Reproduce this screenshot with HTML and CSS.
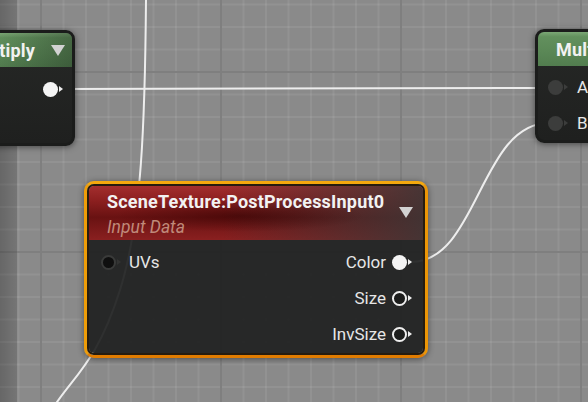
FILE: index.html
```html
<!DOCTYPE html>
<html>
<head>
<meta charset="utf-8">
<link rel="stylesheet" href="styles.css">
</head>
<body>
<div class="canvas">
  <div class="edge-shade"></div>
  <svg class="wires" width="588" height="402" viewBox="0 0 588 402">
    <path d="M62 89 L549 88"/>
    <path d="M411 262 C478 262 480 123 549 123"/>
    <path d="M146 0 C145 120 142 220 120 290 C98 360 75 375 55 405"/>
  </svg>

  <div class="node mul mul-left">
    <div class="mul-head">
      <span class="mul-title">Multiply</span>
      <span class="collapse"></span>
    </div>
    <div class="mul-body">
      <div class="row">
        <span class="pin"><i class="dot dim"></i><i class="arr dim-arr"></i></span>
        <span class="pin"><i class="dot full"></i><i class="arr light"></i></span>
      </div>
      <div class="row">
        <span class="pin"><i class="dot dim"></i><i class="arr dim-arr"></i></span>
      </div>
    </div>
  </div>

  <div class="node mul mul-right">
    <div class="mul-head">
      <span class="mul-title">Multiply</span>
    </div>
    <div class="mul-body">
      <div class="row start">
        <span class="pin"><i class="dot grey"></i><i class="arr grey-arr"></i></span>
        <span class="label">A</span>
      </div>
      <div class="row start">
        <span class="pin"><i class="dot grey"></i><i class="arr grey-arr"></i></span>
        <span class="label">B</span>
      </div>
    </div>
  </div>

  <div class="node st">
    <div class="st-frame">
      <div class="st-head">
        <div class="st-titles">
          <div class="st-title">SceneTexture:PostProcessInput0</div>
          <div class="st-sub">Input Data</div>
        </div>
        <span class="collapse st-collapse"></span>
      </div>
      <div class="st-body">
        <div class="row">
          <div class="side">
            <span class="pin"><i class="dot black"></i><i class="arr black-arr"></i></span>
            <span class="label in-label">UVs</span>
          </div>
          <div class="side">
            <span class="label out-label">Color</span>
            <span class="pin"><i class="dot full"></i><i class="arr light"></i></span>
          </div>
        </div>
        <div class="row end">
          <div class="side">
            <span class="label out-label">Size</span>
            <span class="pin"><i class="dot ring"></i><i class="arr light"></i></span>
          </div>
        </div>
        <div class="row end">
          <div class="side">
            <span class="label out-label">InvSize</span>
            <span class="pin"><i class="dot ring"></i><i class="arr light"></i></span>
          </div>
        </div>
      </div>
    </div>
  </div>
</div>
</body>
</html>
```
FILE: styles.css
```css
html, body {
  margin: 0;
  padding: 0;
  background: #8a8a8a;
}

body {
  font-family: Roboto, "Liberation Sans", sans-serif;
}

.canvas {
  position: relative;
  width: 588px;
  height: 402px;
  overflow: hidden;
  background-color: #8a8a8a;
  background-image:
    linear-gradient(90deg, #7f7f7f 2px, transparent 2px),
    linear-gradient(180deg, #7f7f7f 2px, transparent 2px),
    linear-gradient(90deg, rgba(255, 255, 255, 0.07) 2px, transparent 2px),
    linear-gradient(180deg, rgba(255, 255, 255, 0.07) 2px, transparent 2px);
  background-size: 180px 180px, 180px 180px, 22.5px 22.5px, 22.5px 22.5px;
  background-position: 40px 0, 0 71px, 17.5px 0, 0 3.5px;
}

.edge-shade {
  position: absolute;
  left: 0;
  top: 0;
  width: 17px;
  height: 100%;
  background: linear-gradient(90deg, rgba(0, 0, 0, 0.26), rgba(0, 0, 0, 0.15));
}

.wires {
  position: absolute;
  left: 0;
  top: 0;
}

.wires path {
  fill: none;
  stroke: #ededed;
  stroke-width: 2;
}

.node {
  position: absolute;
  box-sizing: border-box;
}

/* ---------- Multiply nodes ---------- */
.mul {
  background: linear-gradient(180deg, #262826, #1f201f);
  border: 3px solid #1b1c1b;
  border-radius: 9px;
  box-shadow: 0 1px 6px rgba(0, 0, 0, 0.5);
  overflow: hidden;
}

.mul-left {
  left: -101px;
  top: 30px;
  width: 176px;
  height: 116px;
}

.mul-right {
  left: 535px;
  top: 29px;
  width: 120px;
  height: 114px;
}

.mul-head {
  height: 34px;
  display: flex;
  align-items: center;
  justify-content: space-between;
  box-sizing: border-box;
  background:
    linear-gradient(90deg, rgba(0, 0, 0, 0) 55%, rgba(20, 30, 20, 0.35) 100%),
    linear-gradient(180deg, #7ba775 0%, #62905d 14%, #5a8756 60%, #527d4f 100%);
  color: #f2f2f2;
  font-size: 18px;
  font-weight: 700;
  letter-spacing: 0.2px;
}

.mul-left .mul-head {
  padding-left: 66px;
  padding-right: 7px;
}

.mul-right .mul-head {
  padding-left: 18px;
}

.mul-body {
  padding-top: 4px;
}

.mul-right .mul-body {
  padding-top: 3px;
  padding-left: 10px;
}

.mul-left .mul-body {
  padding-left: 1px;
  padding-right: 9px;
}

/* ---------- rows & pins ---------- */
.row {
  height: 36px;
  display: flex;
  align-items: center;
  justify-content: space-between;
}

.row.start {
  justify-content: flex-start;
}

.row.end {
  justify-content: flex-end;
}

.side {
  display: flex;
  align-items: center;
}

.pin {
  display: inline-flex;
  align-items: center;
}

.dot {
  display: block;
  width: 15px;
  height: 15px;
  box-sizing: border-box;
  border-radius: 50%;
}

.dot.full {
  background: #f4f4f4;
}

.dot.ring {
  border: 2.5px solid #eeeeee;
  background: #1c1d1c;
}

.dot.black {
  background: #0f0f0f;
  border: 2px solid #3a3b3a;
}

.dot.grey {
  background: #3c3d3c;
}

.dot.dim {
  background: #3a3b3a;
}

.arr {
  display: block;
  width: 0;
  height: 0;
  margin-left: 1px;
  border-left: 4px solid #eeeeee;
  border-top: 3.5px solid transparent;
  border-bottom: 3.5px solid transparent;
}

.arr.grey-arr,
.arr.dim-arr {
  border-left-color: #3c3d3c;
}

.arr.black-arr {
  border-left-color: #333433;
}

.label {
  color: #e6e6e6;
  font-size: 17px;
  line-height: 20px;
}

.mul-right .label {
  margin-left: 9px;
}

.in-label {
  margin-left: 8px;
}

.out-label {
  margin-right: 6px;
}

.collapse {
  display: block;
  width: 0;
  height: 0;
  border-top: 11px solid #d2d2d2;
  border-left: 7.5px solid transparent;
  border-right: 7.5px solid transparent;
}

/* ---------- SceneTexture node ---------- */
.st {
  left: 84px;
  top: 181px;
  width: 344px;
  border: 3px solid;
  border-color: #f4a80e #ec9606 #e17c00 #ef9d08;
  border-radius: 10px;
  box-shadow: 0 1px 6px rgba(0, 0, 0, 0.45);
}

.st-frame {
  border: 2px solid #261c0f;
  border-radius: 7px;
  overflow: hidden;
}

.st-head {
  height: 54px;
  box-sizing: border-box;
  display: flex;
  justify-content: space-between;
  align-items: flex-start;
  padding: 6px 10px 3px 18px;
  background:
    radial-gradient(ellipse 50% 40% at 45% 55%, rgba(45, 0, 0, 0.5), rgba(45, 0, 0, 0) 75%),
    linear-gradient(90deg, rgba(60, 52, 52, 0) 40%, rgba(62, 54, 54, 0.9) 100%),
    linear-gradient(180deg, #a32e2e 0%, #8e2020 25%, #691212 58%, #8a2020 100%);
}

.st-title {
  color: #f2f2f2;
  font-size: 18px;
  font-weight: 700;
  letter-spacing: 0.2px;
  line-height: 20px;
}

.st-sub {
  margin-top: 5px;
  color: #c08a7a;
  font-size: 17.5px;
  font-style: italic;
  line-height: 20px;
}

.st-collapse {
  margin-top: 15px;
}

.st-body {
  background: rgba(30, 32, 31, 0.92);
  padding: 4px 11px 1px 12px;
}
```
